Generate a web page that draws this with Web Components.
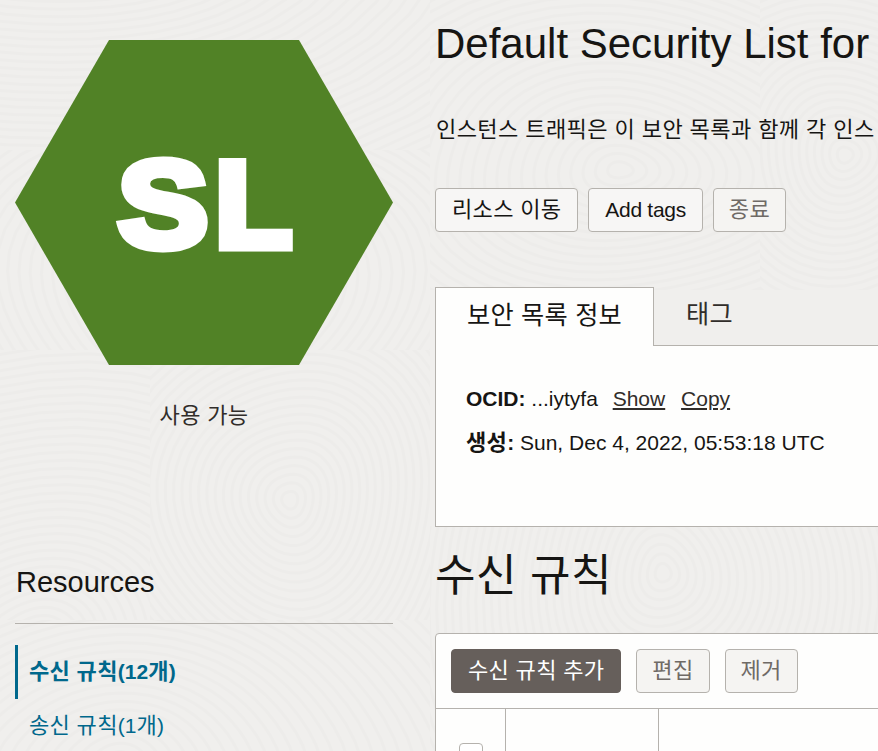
<!DOCTYPE html>
<html lang="ko">
<head>
<meta charset="utf-8">
<title>Default Security List</title>
<style>
    html, body { margin: 0; height: 751px; overflow: hidden; background: #f0efed; }
    body { font: 21px/30px "Liberation Sans", "Noto Sans CJK KR", sans-serif; color: #161513; }
</style>
</head>
<body>
<security-page>
    <resource-side slot="side">
        <nav-item active><ko-t>수신 규칙</ko-t>(12<ko-t>개</ko-t>)</nav-item>
        <nav-item><ko-t>송신 규칙</ko-t>(1<ko-t>개</ko-t>)</nav-item>
    </resource-side>
    <div slot="main">
        <page-header>
            <span slot="title">Default Security List for</span>
            <ko-t slot="desc">인스턴스 트래픽은 이 보안 목록과 함께 각 인스</ko-t>
            <action-button><ko-t>리소스 이동</ko-t></action-button>
            <action-button><span style="letter-spacing:-.3px">Add tags</span></action-button>
            <action-button disabled><ko-t>종료</ko-t></action-button>
        </page-header>
        <detail-tabs></detail-tabs>
        <rules-card>
            <action-button primary><ko-t>수신 규칙 추가</ko-t></action-button>
            <action-button disabled><ko-t>편집</ko-t></action-button>
            <action-button disabled><ko-t>제거</ko-t></action-button>
        </rules-card>
    </div>
</security-page>

<script>
    // hangul runs: the CJK fallback is narrower than the reference's, so bump it a bit
    class KoText extends HTMLElement {
        constructor() {
            super();
            this.attachShadow({ mode: 'open' }).innerHTML =
                '<style>:host { font-size: 1.05em; letter-spacing: var(--ko-ls, 0.3px); line-height: 1; }</style><slot></slot>';
        }
    }
    customElements.define('ko-t', KoText);

    // --- BACKGROUND TEXTURE ---
    class BgTexture extends HTMLElement {
        connectedCallback() {
            const root = this.attachShadow({ mode: 'open' });
            // whorl centres, each one clipped to its own patch of the page
            const whorls = [
                { cx: 60, cy: -120, rx: 1.5, ry: 1, clip: [0, 0, 430, 150] },
                { cx: 620, cy: 170, rx: 1.6, ry: 1, clip: [430, 0, 330, 290] },
                { cx: 845, cy: 155, rx: 1, ry: 1, clip: [760, 0, 118, 290] },
                { cx: 210, cy: 290, rx: 1.4, ry: 1, clip: [0, 150, 430, 200] },
                { cx: 290, cy: 500, rx: 1, ry: 1.1, clip: [150, 350, 280, 270] },
                { cx: 40, cy: 640, rx: 1.3, ry: 1, clip: [0, 350, 150, 270] },
                { cx: 120, cy: 760, rx: 1.7, ry: 1, clip: [0, 620, 430, 131] },
                { cx: 663, cy: 573, rx: 1, ry: 1.15, clip: [430, 526, 448, 225] }
            ];
            let defs = '';
            let rings = '';
            whorls.forEach((w, i) => {
                const [x, y, width, height] = w.clip;
                defs += `<clipPath id="c${i}"><rect x="${x}" y="${y}" width="${width}" height="${height}"/></clipPath>`;
                let d = '';
                for (let r = 8; r < 520; r += 8) {
                    const pts = [];
                    for (let a = 0; a < 48; a++) {
                        const t = a / 48 * Math.PI * 2;
                        const wob = r * (1 + 0.05 * Math.sin(3 * t + i));
                        pts.push(`${(w.cx + Math.cos(t) * wob * w.rx).toFixed(1)} ${(w.cy + Math.sin(t) * wob * w.ry).toFixed(1)}`);
                    }
                    d += `M${pts.join('L')}Z`;
                }
                rings += `<path clip-path="url(#c${i})" d="${d}"/>`;
            });
            root.innerHTML = `
                <style>
                    :host { position: absolute; inset: 0; display: block; overflow: hidden; }
                    svg { display: block; }
                </style>
                <svg width="878" height="751" fill="none" stroke="#edecea" stroke-width="3" stroke-linejoin="round"><defs>${defs}</defs>${rings}</svg>`;
        }
    }
    customElements.define('bg-texture', BgTexture);

    // --- LAYOUT ---
    class SecurityPage extends HTMLElement {
        constructor() {
            super();
            this.attachShadow({ mode: 'open' }).innerHTML = `
                <style>
                    :host { display: grid; grid-template-columns: 378px minmax(0, 1fr); column-gap: 42px; padding-left: 15px; height: 751px; overflow: hidden; position: relative; }
                    .col { position: relative; min-width: 0; }
                </style>
                <bg-texture></bg-texture>
                <div class="col"><slot name="side"></slot></div>
                <div class="col"><slot name="main"></slot></div>
            `;
        }
    }
    customElements.define('security-page', SecurityPage);

    class ResourceSide extends HTMLElement {
        constructor() {
            super();
            this.attachShadow({ mode: 'open' }).innerHTML = `
                <style>
                    :host { display: block; padding-top: 40px; }
                    svg { display: block; }
                    .status { text-align: center; color: #312d2a; margin-top: 36px; height: 30px; --ko-ls: 0.3px; }
                    h2 { font-size: 29px; line-height: 36px; font-weight: 400; margin: 0; padding: 133px 0 23px; border-bottom: 1px solid #b5b2ad; }
                    .list { display: flex; flex-direction: column; margin-top: 21px; }
                    span { display: inline-block; padding-left: 1px; }
                </style>
                <svg width="378" height="325" viewBox="0 0 378 325">
                    <polygon points="0,162.5 94,0 284,0 378,162.5 284,325 94,325" fill="#518226"/>
                    <text y="206.5" font-family="'Liberation Sans', sans-serif" font-weight="700" font-size="122" fill="#fff" stroke="#fff" stroke-width="9" stroke-miterlimit="8"><tspan x="103" textLength="90" lengthAdjust="spacingAndGlyphs">S</tspan><tspan x="200" textLength="77" lengthAdjust="spacingAndGlyphs">L</tspan></text>
                </svg>
                <div class="status"><ko-t>사용 가능</ko-t></div>
                <h2><span>Resources</span></h2>
                <div class="list"><slot></slot></div>
            `;
        }
    }
    customElements.define('resource-side', ResourceSide);

    class NavItem extends HTMLElement {
        constructor() {
            super();
            this.attachShadow({ mode: 'open' }).innerHTML = `
                <style>
                    :host { display: block; color: #00688c; height: 54px; line-height: 54px; padding-left: 11px; border-left: 3px solid transparent; }
                    :host([active]) { font-weight: 700; border-left-color: #00688c; }
                </style>
                <slot></slot>
            `;
        }
    }
    customElements.define('nav-item', NavItem);

    // --- HEADER ---
    class ActionButton extends HTMLElement {
        constructor() {
            super();
            this.attachShadow({ mode: 'open' }).innerHTML = `
                <style>
                    :host { display: inline-flex; align-items: center; box-sizing: border-box; height: 44px; padding: 0 16px; background: #f7f6f5; border: 1px solid #b5b2ad; border-radius: 4px; color: #161513; white-space: nowrap; }
                    :host([disabled]) { color: #6f6a66; background: #f5f4f2; padding: 0 15px; }
                    :host([primary]) { background: #665f5b; border-color: #665f5b; color: #fff; }
                </style>
                <slot></slot>
            `;
        }
    }
    customElements.define('action-button', ActionButton);

    class PageHeader extends HTMLElement {
        constructor() {
            super();
            this.attachShadow({ mode: 'open' }).innerHTML = `
                <style>
                    :host { display: block; padding-top: 14px; white-space: nowrap; --ko-ls: 0.4px; }
                    h1 { font-size: 42px; line-height: 60px; font-weight: 400; margin: 0; }
                    p { margin: 41px 0 0 1px; line-height: 30px; height: 30px; }
                    .actions { display: flex; gap: 10px; margin-top: 43px; --ko-ls: 0.3px; }
                </style>
                <h1><slot name="title"></slot></h1>
                <p><slot name="desc"></slot></p>
                <div class="actions"><slot></slot></div>
            `;
        }
    }
    customElements.define('page-header', PageHeader);

    // --- TABS ---
    class DetailTabs extends HTMLElement {
        constructor() {
            super();
            this.attachShadow({ mode: 'open' }).innerHTML = `
                <style>
                    :host { display: block; margin: 55px -20px 0 0; }
                    .bar { display: flex; height: 59px; position: relative; }
                    .bar::after { content: ""; position: absolute; left: 0; right: 0; bottom: 0; border-bottom: 1px solid #b5b2ad; }
                    .tab { font-size: 24px; line-height: 56px; padding: 0 31px; --ko-ls: 0.25px; }
                    .on { position: relative; z-index: 1; background: #fefefd; border: 1px solid #b5b2ad; border-bottom: 0; }
                    .off { color: #312d2a; line-height: 54px; padding: 1px 32px 0; }
                    .panel { box-sizing: border-box; height: 181px; background: #fefefd; border: 1px solid #b5b2ad; border-top: 0; padding: 31px 30px; }
                    .row { height: 44px; line-height: 44px; white-space: nowrap; }
                    b { font-weight: 700; }
                    a { color: #312d2a; text-decoration: underline; margin-left: 9px; }
                    a + a { margin-left: 10px; }
                </style>
                <div class="bar">
                    <div class="tab on"><ko-t>보안 목록 정보</ko-t></div>
                    <div class="tab off"><ko-t>태그</ko-t></div>
                </div>
                <div class="panel">
                    <div class="row"><b>OCID:</b> ...iytyfa <a>Show</a> <a>Copy</a></div>
                    <div class="row"><b><ko-t>생성</ko-t>:</b> Sun, Dec 4, 2022, 05:53:18 UTC</div>
                </div>
            `;
        }
    }
    customElements.define('detail-tabs', DetailTabs);

    // --- RULES TABLE ---
    class RulesCard extends HTMLElement {
        constructor() {
            super();
            this.attachShadow({ mode: 'open' }).innerHTML = `
                <style>
                    :host { display: block; margin-right: -20px; }
                    h2 { font-size: 42px; line-height: 60px; height: 60px; font-weight: 400; margin: 20px 0 0 0; --ko-ls: 0.5px; }
                    .card { box-sizing: border-box; height: 200px; margin-top: 26px; background: #fefefd; border: 1px solid #b5b2ad; border-radius: 4px 0 0 0; }
                    .toolbar { display: flex; gap: 15px; padding: 15px; height: 75px; box-sizing: border-box; border-bottom: 1px solid #b5b2ad; }
                    .cols { display: grid; grid-template-columns: 70px 153px 1fr; height: 120px; }
                    .cols > div { border-right: 1px solid #b5b2ad; }
                    .cols > div:last-child { border-right: 0; }
                    .check { display: flex; justify-content: center; padding: 34px 0 0 0; }
                    .box { box-sizing: border-box; width: 24px; height: 24px; background: #fff; border: 1px solid #b5b2ad; border-radius: 4px; }
                </style>
                <h2><ko-t>수신 규칙</ko-t></h2>
                <div class="card">
                    <div class="toolbar"><slot></slot></div>
                    <div class="cols">
                        <div class="check"><span class="box"></span></div>
                        <div></div>
                        <div></div>
                    </div>
                </div>
            `;
        }
    }
    customElements.define('rules-card', RulesCard);
</script>
</body>
</html>
